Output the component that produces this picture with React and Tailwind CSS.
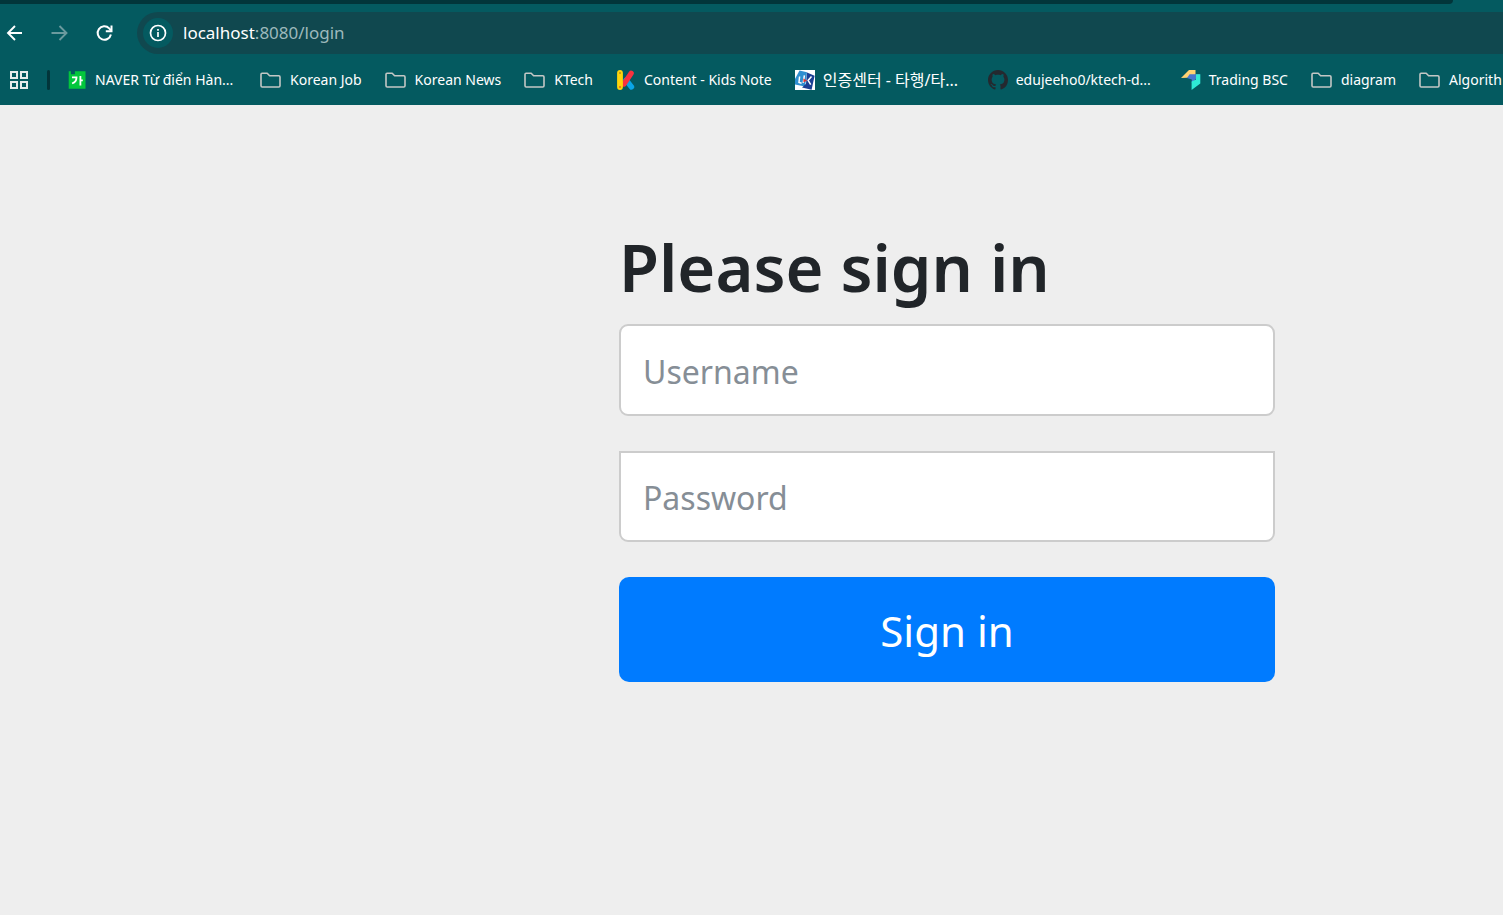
import React from "react";

function FolderIcon() {
  return (
    <svg viewBox="0 0 22 20" className="h-5 w-[22px] shrink-0" fill="none" stroke="#c4c7c5" strokeWidth="1.6" strokeLinejoin="round">
      <path d="M2 3.200h5.200l2.400 2.500h9.200q1.200 0 1.200 1.200v8.900q0 1.200-1.200 1.200H2.200q-1.200 0-1.200-1.200V4.400q0-1.200 1-1.200z" />
    </svg>
  );
}

function DictionaryIcon() {
  return (
    <svg viewBox="0 0 20 20" className="h-5 w-5 shrink-0">
      <path d="M1.700 1.300h2.200v3h4V1.300h10.600v17.400H1.700z" fill="#03c73c" />
      <path d="M5 7.400h4.500c0 3-1.800 5-4.400 6.100M13.400 6v9.500M13.600 10.400h2.200" fill="none" stroke="#fff" strokeWidth="1.800" />
    </svg>
  );
}

function KidsNoteIcon() {
  return (
    <svg viewBox="0 0 20 20" className="h-5 w-5 shrink-0" strokeLinecap="round">
      <path d="M10 10l5.500 7" stroke="#0aa5e6" strokeWidth="5.400" />
      <path d="M15.200 3.200L8 14" stroke="#f8323f" strokeWidth="5.200" />
      <path d="M4 3v14" stroke="#ffd40a" strokeWidth="5.800" />
      <circle cx="4" cy="3" r=".9" fill="#b58a1a" />
      <circle cx="4" cy="17" r=".9" fill="#e0542a" />
    </svg>
  );
}

function CertificateIcon() {
  return (
    <svg viewBox="0 0 20 20" className="h-5 w-5 shrink-0">
      <path d="M0 0h20v20H0z" fill="#fff" />
      <path d="M4.500.6L12 2.200 10 16.600 0 14.500V9z" fill="#2f8fd0" />
      <path d="M12 2.500l7.600 3.200-3 14L7 17.400l4-3.600z" fill="#1b3f94" />
      <path d="M4.600 6.500L4 12.500l2.600.7M9.400 5.400L8.200 13M16.500 6.600l-3.400 3.800 2.600 4.300" fill="none" stroke="#fff" strokeWidth="1.500" />
      <path d="M8.300 8.400l3.600 2-3.400 2.200z" fill="#e3342f" />
    </svg>
  );
}

function GithubIcon() {
  return (
    <svg viewBox="0 0 16 16" className="h-5 w-5 shrink-0" fill="#24292f">
      <path d="M8 0C3.58 0 0 3.58 0 8c0 3.54 2.29 6.53 5.47 7.59.4.07.55-.17.55-.38 0-.19-.01-.82-.01-1.49-2.01.37-2.53-.49-2.69-.94-.09-.23-.48-.94-.82-1.13-.28-.15-.68-.52-.01-.53.63-.01 1.08.58 1.23.82.72 1.21 1.87.87 2.33.66.07-.52.28-.87.51-1.07-1.78-.2-3.64-.89-3.64-3.95 0-.87.31-1.59.82-2.15-.08-.2-.36-1.02.08-2.12 0 0 .67-.21 2.2.82.64-.18 1.32-.27 2-.27s1.36.09 2 .27c1.53-1.04 2.2-.82 2.2-.82.44 1.1.16 1.92.08 2.12.51.56.82 1.27.82 2.15 0 3.07-1.87 3.75-3.65 3.95.29.25.54.73.54 1.48 0 1.07-.01 1.93-.01 2.2 0 .21.15.46.55.38A8.01 8.01 0 0 0 16 8c0-4.42-3.58-8-8-8z" />
    </svg>
  );
}

function TradingIcon() {
  return (
    <svg viewBox="0 0 20 20" className="h-5 w-5 shrink-0">
      <path d="M8 0h6.500v4.400L12 7.600 0 8z" fill="#ffd272" />
      <path d="M8.600 4.200h10.600l-8.400 8.800V9.400L6 8z" fill="#4777d0" />
      <path d="M19.300 4.200v9.200L10.600 20v-8.400L15 9.500V4.200z" fill="#2fe9d5" />
    </svg>
  );
}

const bookmarks = [
  { label: "NAVER Từ điển Hàn...", Icon: DictionaryIcon, labelClass: "w-[142px]" },
  { label: "Korean Job", Icon: FolderIcon },
  { label: "Korean News", Icon: FolderIcon },
  { label: "KTech", Icon: FolderIcon },
  { label: "Content - Kids Note", Icon: KidsNoteIcon },
  { label: "인증센터 - 타행/타...", Icon: CertificateIcon, labelClass: "w-[142px] text-base leading-5" },
  { label: "edujeeho0/ktech-d...", Icon: GithubIcon, labelClass: "w-[142px]" },
  { label: "Trading BSC", Icon: TradingIcon },
  { label: "diagram", Icon: FolderIcon },
  { label: "Algorith", Icon: FolderIcon },
];

function Toolbar() {
  return (
    <div className="flex h-[50px] items-end">
      <div className="flex h-[42px] shrink-0 items-center gap-[25px] pl-1 pr-[23px] text-white">
        <button type="button" aria-label="Back" className="h-5 w-5">
          <svg viewBox="0 0 20 20" className="h-5 w-5" fill="none" stroke="currentColor" strokeWidth="1.900">
            <path d="M18 10H4.500M11 3L4 10l7 7" />
          </svg>
        </button>
        <button type="button" aria-label="Forward" className="h-5 w-5 text-[#6b9a9e]">
          <svg viewBox="0 0 20 20" className="h-5 w-5" fill="none" stroke="currentColor" strokeWidth="1.900">
            <path d="M2.500 10H17M10.500 3l7 7-7 7" />
          </svg>
        </button>
        <button type="button" aria-label="Reload" className="h-5 w-5">
          <svg viewBox="0 0 20 20" className="h-5 w-5" fill="none" stroke="currentColor" strokeWidth="2">
            <path d="M16.900 11.500A6.700 6.700 0 1 1 15.200 5.400L16.900 7.300" />
            <path d="M17.500 2.500v5.700h-5.700" />
          </svg>
        </button>
      </div>
      <div className="flex h-[42px] min-w-0 flex-1 items-center gap-2.5 rounded-l-full bg-[#10484f] pl-1.5">
        <button type="button" aria-label="Site information" className="flex h-[30px] w-[30px] shrink-0 items-center justify-center rounded-full bg-[#045a60] text-white">
          <svg viewBox="0 0 18 18" className="h-[18px] w-[18px]" fill="none" stroke="currentColor" strokeWidth="1.700">
            <circle cx="9" cy="9" r="7.500" />
            <path d="M9 8v5M9 5v1.800" />
          </svg>
        </button>
        <p className="text-[17px] leading-6 text-[#9db9bc]">
          <span className="text-white">localhost</span>:8080/login
        </p>
      </div>
    </div>
  );
}

function BookmarksBar() {
  return (
    <nav aria-label="Bookmarks" className="flex h-[51px] items-center overflow-hidden pl-2.5 text-sm text-white">
      <button type="button" aria-label="Apps" className="h-[18px] w-[18px] shrink-0">
        <svg viewBox="0 0 18 18" className="h-[18px] w-[18px]" fill="none" stroke="#e6eced" strokeWidth="2">
          <path d="M1 1h6v6H1zM11 1h6v6h-6zM1 11h6v6H1zM11 11h6v6h-6z" />
        </svg>
      </button>
      <span className="ml-[19px] mr-[17px] h-5 w-[3px] shrink-0 rounded-full bg-[#02353a]" />
      <ul className="flex items-center gap-[23px]">
        {bookmarks.map(({ label, Icon, labelClass = "" }) => (
          <li key={label} className="shrink-0">
            <a href="#" className="flex items-center gap-2">
              <Icon />
              <span className={`whitespace-nowrap ${labelClass}`}>{label}</span>
            </a>
          </li>
        ))}
      </ul>
    </nav>
  );
}

export default function App() {
  return (
    <div className="flex min-h-screen flex-col overflow-x-hidden bg-[#eeeeee] font-['Noto_Sans','Noto_Sans_CJK_KR',sans-serif]">
      <header className="bg-[#045a60]">
        <div className="pr-[50px]">
          <div className="h-1 rounded-br-lg bg-[#02353a]" />
        </div>
        <Toolbar />
        <BookmarksBar />
      </header>
      <main className="flex flex-1 justify-center pl-[391px] pt-[120px]">
        <form className="flex w-[656px] flex-col gap-[35px]" onSubmit={(e) => e.preventDefault()}>
          <div>
            <h1 className="mb-[15px] text-[65px] font-semibold leading-[84px] text-[#212529]">Please sign in</h1>
            <input
              type="text"
              aria-label="Username"
              placeholder="Username"
              className="h-[92px] w-full rounded-[9px] border-2 border-[#cccccc] bg-white px-[22px] pt-[2px] text-[32px] text-[#495057] placeholder:text-[#868e96]"
            />
          </div>
          <input
            type="password"
            aria-label="Password"
            placeholder="Password"
            className="h-[91px] w-full rounded-b-[9px] border-2 border-[#cccccc] bg-white px-[22px] pt-[2px] text-[32px] text-[#495057] placeholder:text-[#868e96]"
          />
          <button type="submit" className="h-[105px] w-full rounded-[10px] bg-[#007bff] pt-[2px] text-[42px] text-white">
            Sign in
          </button>
        </form>
      </main>
    </div>
  );
}
